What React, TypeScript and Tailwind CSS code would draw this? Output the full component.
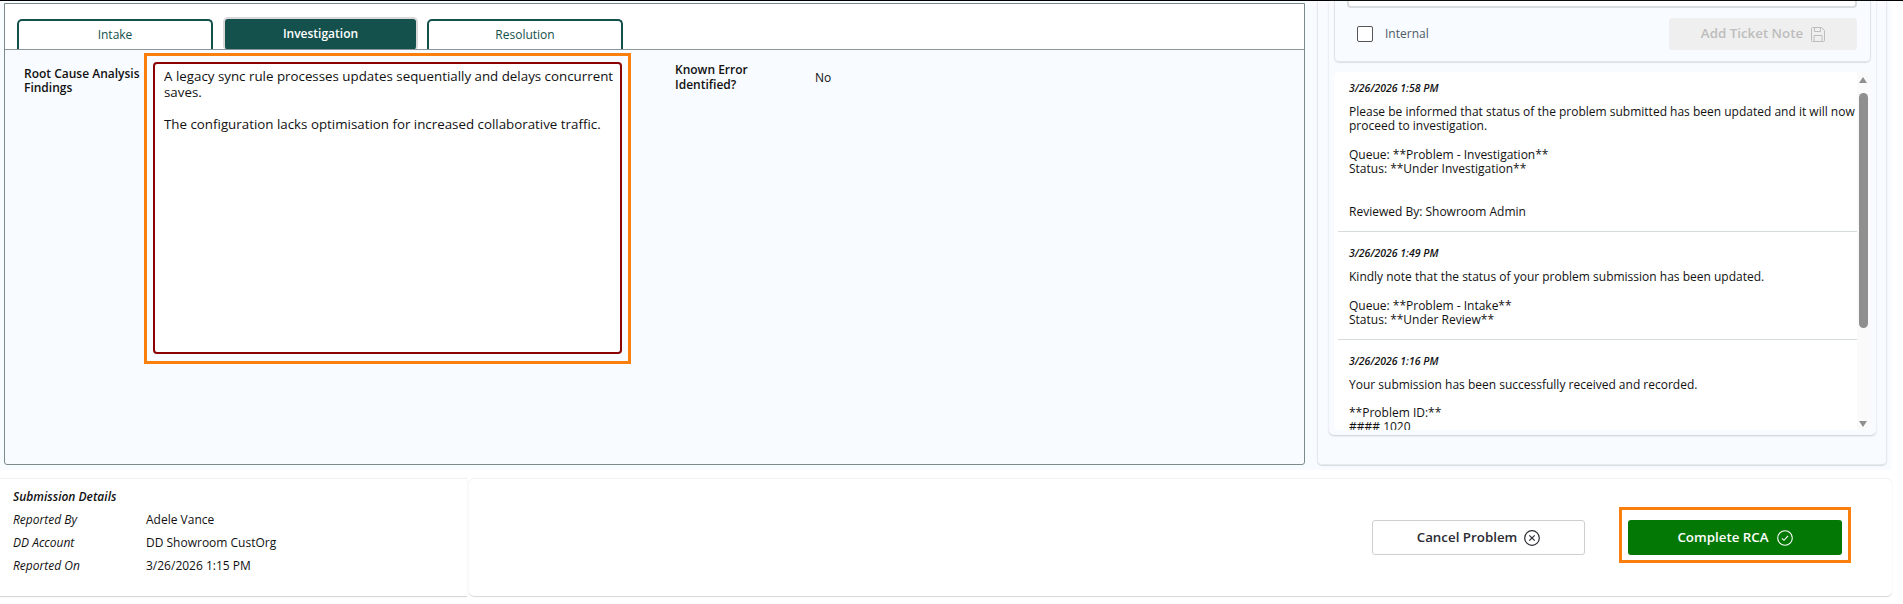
import { ReactNode } from 'react';

const font = 'font-["Open_Sans","Noto_Sans",sans-serif]';

function Tab({ label, active }: { label: string; active?: boolean }) {
  if (active) {
    return (
      <div className="h-[32px] w-[195px] -mr-[1px] rounded-t-[5px] rounded-b-[3px] border-2 border-[#d9d9d9] border-b-0 bg-[#14514c] flex items-center justify-center text-[12px] font-semibold text-white">
        {label}
      </div>
    );
  }
  return (
    <div className="h-[30px] w-[196px] rounded-t-[5px] border-2 border-b-0 border-[#14514c] bg-white flex items-center justify-center text-[12px] font-medium text-[#14514c]">
      {label}
    </div>
  );
}

function DetailRow({ label, value }: { label: string; value: string }) {
  return (
    <div className="flex h-[23px] items-center text-[12px] text-[#111]">
      <div className="w-[133px] italic">{label}</div>
      <div>{value}</div>
    </div>
  );
}

function Note({ date, children, className }: { date: string; children: ReactNode; className: string }) {
  return (
    <div className={`ml-[4px] pl-[11px] ${className}`}>
      <div className="text-[10.5px] leading-[14px] font-semibold italic text-[#111]">{date}</div>
      <div className="mt-[10px] text-[12px] leading-[14.3px] text-[#111] whitespace-pre-line">{children}</div>
    </div>
  );
}

export default function App() {
  return (
    <div className={`${font} w-[1903px] h-[604px] overflow-hidden bg-white flex flex-col`}>
      <div className="h-[1px] bg-black" />

      {/* top area */}
      <div className="h-[469px] w-[1891px] bg-[#f8fbff] flex items-start">
        {/* left panel */}
        <div className="ml-[4px] mt-[2px] w-[1301px] h-[462px] border border-[#7b8a8a] rounded-b-[3px] flex flex-col">
          <div className="h-[46px] bg-white border-b border-[#8c9696] flex items-end gap-[10px] pl-[12px]">
            <Tab label="Intake" />
            <Tab label="Investigation" active />
            <Tab label="Resolution" />
          </div>
          <div className="flex items-start">
            <div className="w-[139px] pl-[19px] pt-[17px] text-[12px] leading-[14px] font-semibold text-[#111]">
              Root Cause Analysis Findings
            </div>
            {/* highlighted textarea */}
            <div className="mt-[3px] w-[487px] h-[311px] border-[3px] border-[#fa7f0c] pt-[6px] px-[6px] pb-[7px]">
              <div className="h-full rounded-[4px] border-2 border-[#8b0000] bg-white pl-[9px] pr-[4px] py-[4px] text-[13.33px] leading-[16px] text-[#111]">
                <p>A legacy sync rule processes updates sequentially and delays concurrent saves.</p>
                <p className="mt-[16px]">The configuration lacks optimisation for increased collaborative traffic.</p>
              </div>
            </div>
            <div className="ml-[44px] w-[100px] pt-[12px] text-[12px] leading-[15px] font-semibold text-[#111]">
              Known Error Identified?
            </div>
            <div className="ml-[40px] pt-[20px] text-[12px] leading-[16px] text-[#111]">No</div>
          </div>
        </div>

        {/* right panel */}
        <div className="ml-[12px] w-[570px] h-[464px] rounded-b-[5px] bg-[#f8fbff] border-x border-b border-[#e6eaee] shadow-[0_1px_1px_#d8dde0] pl-[11px]">
          <div className="w-[547px] h-[434px] rounded-b-[5px] shadow-[0_1px_2px_#c8cdd0] px-[5px] flex flex-col">
            {/* add note */}
            <div className="h-[61px] shrink-0 rounded-b-[5px] border-b border-x border-[#e0e4e8] shadow-[0_1px_1px_#dde1e4] relative">
              <div className="absolute left-[12px] top-0 w-[510px] h-[7px] bg-white border-2 border-t-0 border-[#d8dcdf] rounded-b-[4px]" />
              <div className="flex items-center pl-[22px] pr-[13px] pt-[17px]">
                <div className="w-[16px] h-[16px] rounded-[2px] border border-[#555] bg-white" />
                <span className="ml-[12px] text-[12px] text-[#4d5a63]">Internal</span>
                <div className="ml-auto w-[188px] h-[32px] rounded-[3px] bg-[#efefef] flex items-center justify-center gap-[8px] text-[13.33px] font-semibold text-[#bdbdbd]">
                  Add Ticket Note
                  <svg width="14" height="15" viewBox="0 0 14 15" fill="none" stroke="#bdbdbd" strokeWidth="1">
                    <path d="M1.500 .5h9l3 3v10a1 1 0 0 1-1 1h-11a1 1 0 0 1-1-1v-12a1 1 0 0 1 1-1z" />
                    <path d="M3.500 .5v4h6v-4M3 14.500v-6h8v6" />
                  </svg>
                </div>
              </div>
            </div>
            {/* notes list */}
            <div className="relative mt-[10px] h-[358px] pr-[14px] rounded-[5px] bg-white overflow-hidden">
              <Note date="3/26/2026 1:58 PM" className="pt-[9px] pb-[12px] border-b border-[#d5dadd]">
                {'Please be informed that status of the problem submitted has been updated and it will now proceed to investigation.\n\nQueue: **Problem - Investigation**\nStatus: **Under Investigation**\n\n\nReviewed By: Showroom Admin'}
              </Note>
              <Note date="3/26/2026 1:49 PM" className="pt-[14px] pb-[11px] border-b border-[#d5dadd]">
                {'Kindly note that the status of your problem submission has been updated.\n\nQueue: **Problem - Intake**\nStatus: **Under Review**'}
              </Note>
              <Note date="3/26/2026 1:16 PM" className="pt-[14px]">
                {'Your submission has been successfully received and recorded.\n\n**Problem ID:**\n#### 1020'}
              </Note>
              {/* scrollbar */}
              <div className="absolute right-0 top-0 bottom-0 w-[14px] bg-[#fafafa]">
                <div className="absolute left-[2px] top-[5px] w-0 h-0 border-x-[4.5px] border-x-transparent border-b-[6px] border-b-[#8f8f8f]" />
                <div className="absolute left-[2px] top-[21px] w-[9px] h-[235px] rounded-[5px] bg-[#8f8f8f]" />
                <div className="absolute left-[2px] bottom-[3px] w-0 h-0 border-x-[4.5px] border-x-transparent border-t-[6px] border-t-[#8f8f8f]" />
              </div>
            </div>
          </div>
        </div>
      </div>

      {/* footer */}
      <div className="mt-[9px] w-[1892px] h-[117px] flex gap-[2px]">
        <div className="w-[467px] h-full bg-white shadow-[0_1px_1px_#d8d8d8,0_-1px_1px_#f0f0f0] pl-[13px] pt-[7px]">
          <div className="h-[22px] flex items-center text-[12px] font-semibold italic text-[#111]">Submission Details</div>
          <DetailRow label="Reported By" value="Adele Vance" />
          <DetailRow label="DD Account" value="DD Showroom CustOrg" />
          <DetailRow label="Reported On" value="3/26/2026 1:15 PM" />
        </div>
        <div className="flex-1 rounded-[5px] bg-white shadow-[0_1px_1px_#d8d8d8,0_-1px_1px_#f0f0f0] flex items-center justify-end pr-[41px]">
          <div className="w-[213px] h-[35px] rounded-[3px] border border-[#cfcfcf] bg-white flex items-center justify-center gap-[7px] text-[13.33px] font-semibold text-[#2b2b33]">
            Cancel Problem
            <svg width="16" height="16" viewBox="0 0 16 16" fill="none" stroke="#2b2b33" strokeWidth="1.200">
              <circle cx="8" cy="8" r="7.300" />
              <path d="M5.300 5.300l5.400 5.400M10.700 5.300l-5.400 5.400" />
            </svg>
          </div>
          <div className="ml-[34px] -mt-[5px] w-[232px] h-[56px] border-[3px] border-[#fa7f0c] pt-[10px] px-[6px]">
            <div className="w-[214px] h-[35px] rounded-[3px] bg-[#047804] flex items-center justify-center gap-[8px] text-[13.33px] font-semibold text-white">
              Complete RCA
              <svg width="16" height="16" viewBox="0 0 16 16" fill="none" stroke="#fff" strokeWidth="1.100">
                <circle cx="8" cy="8" r="7.300" />
                <path d="M4.900 8.300l2.100 2 4-4.400" />
              </svg>
            </div>
          </div>
        </div>
      </div>
    </div>
  );
}
